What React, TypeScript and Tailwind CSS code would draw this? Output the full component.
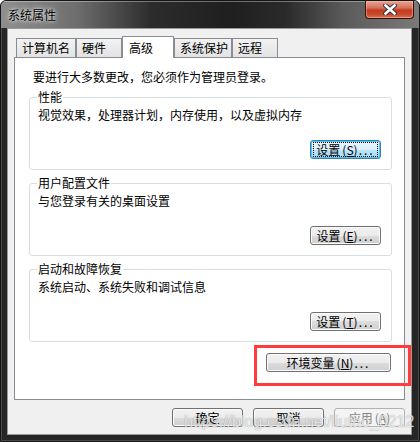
import React from "react";

const btnBase =
  "flex h-[19px] w-[71px] items-center justify-center rounded-[3px] border text-[12px] leading-[16px]";
const normalBtn =
  btnBase +
  " border-[#707070] bg-[linear-gradient(#f2f2f2_0%,#ebebeb_50%,#dddddd_50%,#cfcfcf_100%)] shadow-[inset_0_0_0_1px_#fcfcfc] text-black";
const focusBtn =
  btnBase +
  " border-[#3c7fb1] bg-[linear-gradient(#eaf6fd_0%,#d9f0fc_50%,#bee6fd_50%,#a7d9f5_100%)] shadow-[inset_0_0_0_1px_#48c9f6] text-black";
const disabledBtn =
  btnBase + " border-[#adb2b5] bg-[#f4f4f4] text-[#838383]";

function Acc({ text, k, dots = true }: { text: string; k: string; dots?: boolean }) {
  return (
    <span className="whitespace-nowrap">
      {text}
      <span className="ml-[2px]">(</span>
      <span className="underline underline-offset-1">{k}</span>)
      {dots ? <span className="ml-[1px] tracking-[2px]">...</span> : null}
    </span>
  );
}

function Group({
  title,
  desc,
  k,
  focused,
  className,
}: {
  title: string;
  desc: string;
  k: string;
  focused?: boolean;
  className?: string;
}) {
  return (
    <fieldset
      className={
        "ml-[14px] mr-[12px] min-w-0 rounded-[3px] border border-[#d5dfe5] pb-[10px] pl-[8px] pr-[10px] pt-[2px] " +
        (className ?? "")
      }
    >
      <legend className="-ml-[1px] px-[1px] leading-[16px]">{title}</legend>
      <div className="leading-[16px]">{desc}</div>
      <div className="mt-[17px] flex justify-end">
        {focused ? (
          <button className={focusBtn}>
            <span className="border border-dotted border-black px-[2px] leading-[13px]">
              <Acc text="设置" k="S" />
            </span>
          </button>
        ) : (
          <button className={normalBtn}>
            <Acc text="设置" k={k} />
          </button>
        )}
      </div>
    </fieldset>
  );
}

function Tab({ label, w, selected }: { label: string; w: string; selected?: boolean }) {
  if (selected) {
    return (
      <div
        className={
          "relative z-10 -mb-[1px] flex h-[22px] items-center border-x border-t border-[#898c95] bg-white pl-[6px] " + w
        }
      >
        {label}
      </div>
    );
  }
  return (
    <div
      className={
        "flex h-[19px] items-center self-end border-x border-t border-[#898c95] bg-[linear-gradient(#f2f2f2,#e3e3e3)] pl-[5px] " +
        w
      }
    >
      {label}
    </div>
  );
}

export default function App() {
  return (
    <div className="relative flex h-[442px] w-[420px] flex-col overflow-hidden rounded-t-[6px] border border-[#151515] bg-[#262626] font-['Noto_Sans_CJK_SC',sans-serif] text-[12px] text-black shadow-[inset_1px_0_0_#4a4a4a,inset_-1px_0_0_#4a4a4a,inset_0_-1px_0_#4a4a4a]">
      {/* Title bar */}
      <div className="flex h-[27px] shrink-0 items-center bg-[linear-gradient(90deg,#8e8e8e_0%,#6e6e6e_18%,#2c2c2c_36%,#1f1f1f_55%,#2a2a2a_68%,#5a5a5a_82%,#7a7a7a_100%)] pl-[7px] shadow-[inset_0_1px_0_rgba(255,255,255,0.35)]">
        <span className="leading-[16px] [text-shadow:0_0_6px_rgba(255,255,255,0.9),0_0_3px_rgba(255,255,255,0.8)]">
          系统属性
        </span>
        <div className="ml-auto mr-[5px] flex h-[18px] w-[49px] items-center justify-center self-start rounded-b-[4px] border border-t-0 border-[#3a0e06] bg-[linear-gradient(#e8a595_0%,#d6705a_40%,#c23b1e_55%,#c84b2c_80%,#d9775c_100%)] shadow-[inset_0_0_0_1px_rgba(255,200,180,0.45)]">
          <svg width="14" height="11" viewBox="0 0 14 11">
            <path d="M2.5 1.5 L11.5 9.5 M11.5 1.5 L2.5 9.5" stroke="#2b3447" strokeWidth="4.6" strokeLinecap="square" />
            <path d="M2.5 1.5 L11.5 9.5 M11.5 1.5 L2.5 9.5" stroke="#ffffff" strokeWidth="2.6" strokeLinecap="square" />
          </svg>
        </div>
      </div>

      {/* Client area */}
      <div className="mb-[6px] ml-[6px] flex w-[405px] flex-1 flex-col border border-[#9a9a9a] bg-[#f0f0f0]">
        {/* Tabs */}
        <div className="ml-[8px] mt-[7px] flex h-[21px] items-end">
          <Tab label="计算机名" w="w-[60px]" />
          <Tab label="硬件" w="w-[46px]" />
          <Tab label="高级" w="w-[52px]" selected />
          <Tab label="系统保护" w="w-[58px]" />
          <Tab label="远程" w="w-[46px]" />
        </div>

        {/* Panel */}
        <div className="mx-[6px] flex h-[343px] flex-col border border-[#898c95] bg-white">
          <div className="pl-[18px] pt-[11px] leading-[16px]">要进行大多数更改，您必须作为管理员登录。</div>
          <Group className="mt-[4px]" title="性能" desc="视觉效果，处理器计划，内存使用，以及虚拟内存" k="S" focused />
          <Group className="mt-[5px]" title="用户配置文件" desc="与您登录有关的桌面设置" k="E" />
          <Group className="mt-[5px]" title="启动和故障恢复" desc="系统启动、系统失败和调试信息" k="T" />
          <div className="mr-[13px] mt-[11px] flex justify-end">
            <button className={normalBtn + " !w-[125px]"}>
              <Acc text="环境变量" k="N" />
            </button>
          </div>
        </div>

        {/* Bottom buttons */}
        <div className="mr-[6px] mt-[8px] flex justify-end gap-[10px]">
          <button className={normalBtn}>确定</button>
          <button className={normalBtn}>取消</button>
          <button className={disabledBtn}>
            <Acc text="应用" k="A" dots={false} />
          </button>
        </div>
      </div>

      {/* Annotation overlay */}
      <div className="pointer-events-none absolute left-[253px] top-[344px] h-[41px] w-[157px] border-[3px] border-[#ff3b3b]" />

      {/* Watermark */}
      <div className="pointer-events-none absolute left-[183px] top-[412px] whitespace-nowrap font-['Liberation_Sans',sans-serif] text-[16px] leading-[18px] text-[rgba(255,255,255,0.8)] [text-shadow:0_0_1px_rgba(0,0,0,0.45)]">
        https://blog.csdn.net/liutao_0212
      </div>
    </div>
  );
}
